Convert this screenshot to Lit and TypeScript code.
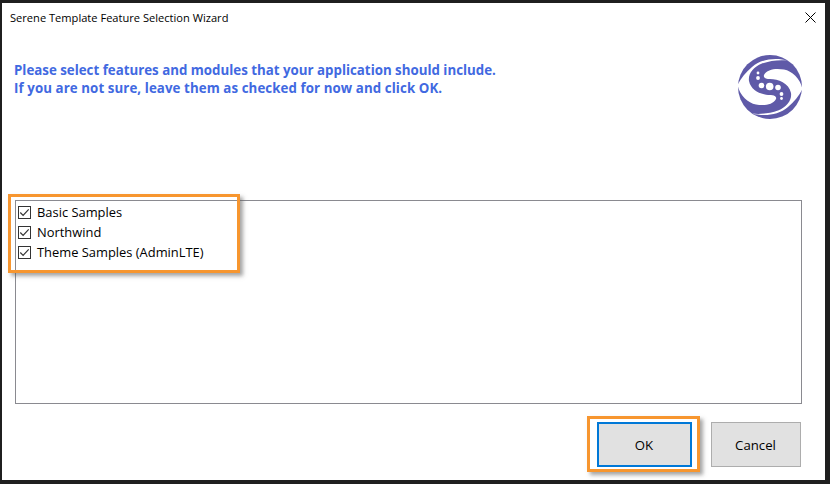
import { LitElement, html, css, svg } from "lit";
import { customElement } from "lit/decorators.js";

const check = svg`<svg width="13" height="13" viewBox="0 0 13 13"><rect x="0.5" y="0.5" width="12" height="12" fill="#fff" stroke="#333"/><path d="M2.300 6.500 L5.100 9.300 L10.700 3.300" fill="none" stroke="#333" stroke-width="1.200"/></svg>`;

const arm = "M18 -26.500 C6 -29.500 -8 -28.500 -18 -20 C-24 -15 -29 -9 -32.500 -2 C-30 9 -22 16 -14 17.500 C-6 19 3 18 6 12 C7 9 3 8 0 8 C-8 8 -19 4 -21 -6 C-22 -13 -17 -20 -8 -23.500 C0 -26.500 10 -27.500 18 -26.500 Z";

const logo = svg`<svg width="66" height="66" viewBox="-33 -33 66 66">
<circle r="32" fill="#5f5aa8"/>
<path d=${arm} fill="#fff"/>
<path d=${arm} fill="#fff" transform="rotate(180)"/>
<g fill="#fff"><circle cx="-0.300" cy="-0.500" r="3.800"/><circle cx="-8.500" cy="-1.500" r="2.800"/><circle cx="8" cy="0.500" r="2.800"/><circle cx="-12" cy="-9" r="1.900"/><circle cx="11.500" cy="7" r="1.900"/><circle cx="-12" cy="-14" r="1.400"/><circle cx="11.500" cy="11.500" r="1.400"/></g>
</svg>`;

@customElement("app-root")
export class AppRoot extends LitElement {
  static styles = css`
    :host {
      display: block;
      width: 830px;
      height: 484px;
      background: #1f1f1f;
      font-family: "Open Sans", "Noto Sans", sans-serif;
      color: #000;
      overflow: hidden;
    }
    .window {
      position: relative;
      box-sizing: border-box;
      margin: 3px 0 0 2px;
      width: 823px;
      height: 477px;
      background: #fff;
      padding: 0 23px 13px 13px;
      display: flex;
      flex-direction: column;
    }
    .titlebar {
      height: 30px;
      display: flex;
      align-items: center;
      justify-content: space-between;
      margin: 0 -23px 0 -5px;
      padding: 0 9px 0 0;
      font-size: 11.1px;
      line-height: 16px;
      flex: none;
    }
    .title { padding: 0 0 1px 0; }
    .close { display: block; margin-top: -1px; }
    .header {
      height: 167px;
      flex: none;
      display: flex;
      justify-content: space-between;
      align-items: flex-start;
    }
    .intro {
      margin: 0 0 0 -1px;
      padding: 28px 0 0 0;
      color: #4169e1;
      font-size: 13.3px;
      font-weight: 700;
      line-height: 18px;
      white-space: nowrap;
    }
    .intro span { display: block; }
    .intro .second { letter-spacing: 0.08px; }
    .logo { margin: 20.500px -1px 0 0; display: block; }
    .logo svg { display: block; }
    .list {
      box-sizing: border-box;
      height: 204px;
      flex: none;
      border: 1px solid #8a8a90;
      padding: 1px 0 0 2px;
      display: flex;
      flex-direction: column;
    }
    .item {
      height: 20px;
      display: flex;
      align-items: center;
      gap: 6px;
      font-size: 12.9px;
    }
    .item svg { display: block; flex: none; }
    .actions {
      margin: 18px 1.500px 0 0;
      display: flex;
      justify-content: flex-end;
      gap: 19px;
    }
    button {
      box-sizing: border-box;
      height: 45px;
      background: #e1e1e1;
      border: 1px solid #adadad;
      font: inherit;
      font-size: 13.2px;
      color: #000;
      padding: 0;
    }
    .ok { width: 95px; border: 2px solid #0078d7; }
    .cancel { width: 90px; }
    .mark {
      position: absolute;
      box-sizing: border-box;
      border: 3px solid #f7962f;
      box-shadow: 3px 3px 4px rgba(90, 90, 90, 0.55);
      pointer-events: none;
    }
    .mark-list { left: 6px; top: 191px; width: 232px; height: 79px; }
    .mark-ok { left: 585px; top: 413px; width: 113px; height: 56px; }
  `;

  render() {
    const items = ["Basic Samples", "Northwind", "Theme Samples (AdminLTE)"];
    return html`
      <div class="window">
        <div class="titlebar">
          <span class="title">Serene Template Feature Selection Wizard</span>
          <svg class="close" width="11" height="11" viewBox="0 0 11 11"><path d="M0.500 0.500 L10.500 10.500 M10.500 0.500 L0.500 10.500" stroke="#000" stroke-width="1" fill="none"/></svg>
        </div>
        <div class="header">
          <p class="intro"><span>Please select features and modules that your application should include.</span><span class="second">If you are not sure, leave them as checked for now and click OK.</span></p>
          <div class="logo">${logo}</div>
        </div>
        <div class="list">
          ${items.map((t) => html`<div class="item">${check}<span>${t}</span></div>`)}
        </div>
        <div class="actions">
          <button class="ok">OK</button>
          <button class="cancel">Cancel</button>
        </div>
        <div class="mark mark-list"></div>
        <div class="mark mark-ok"></div>
      </div>
    `;
  }
}
